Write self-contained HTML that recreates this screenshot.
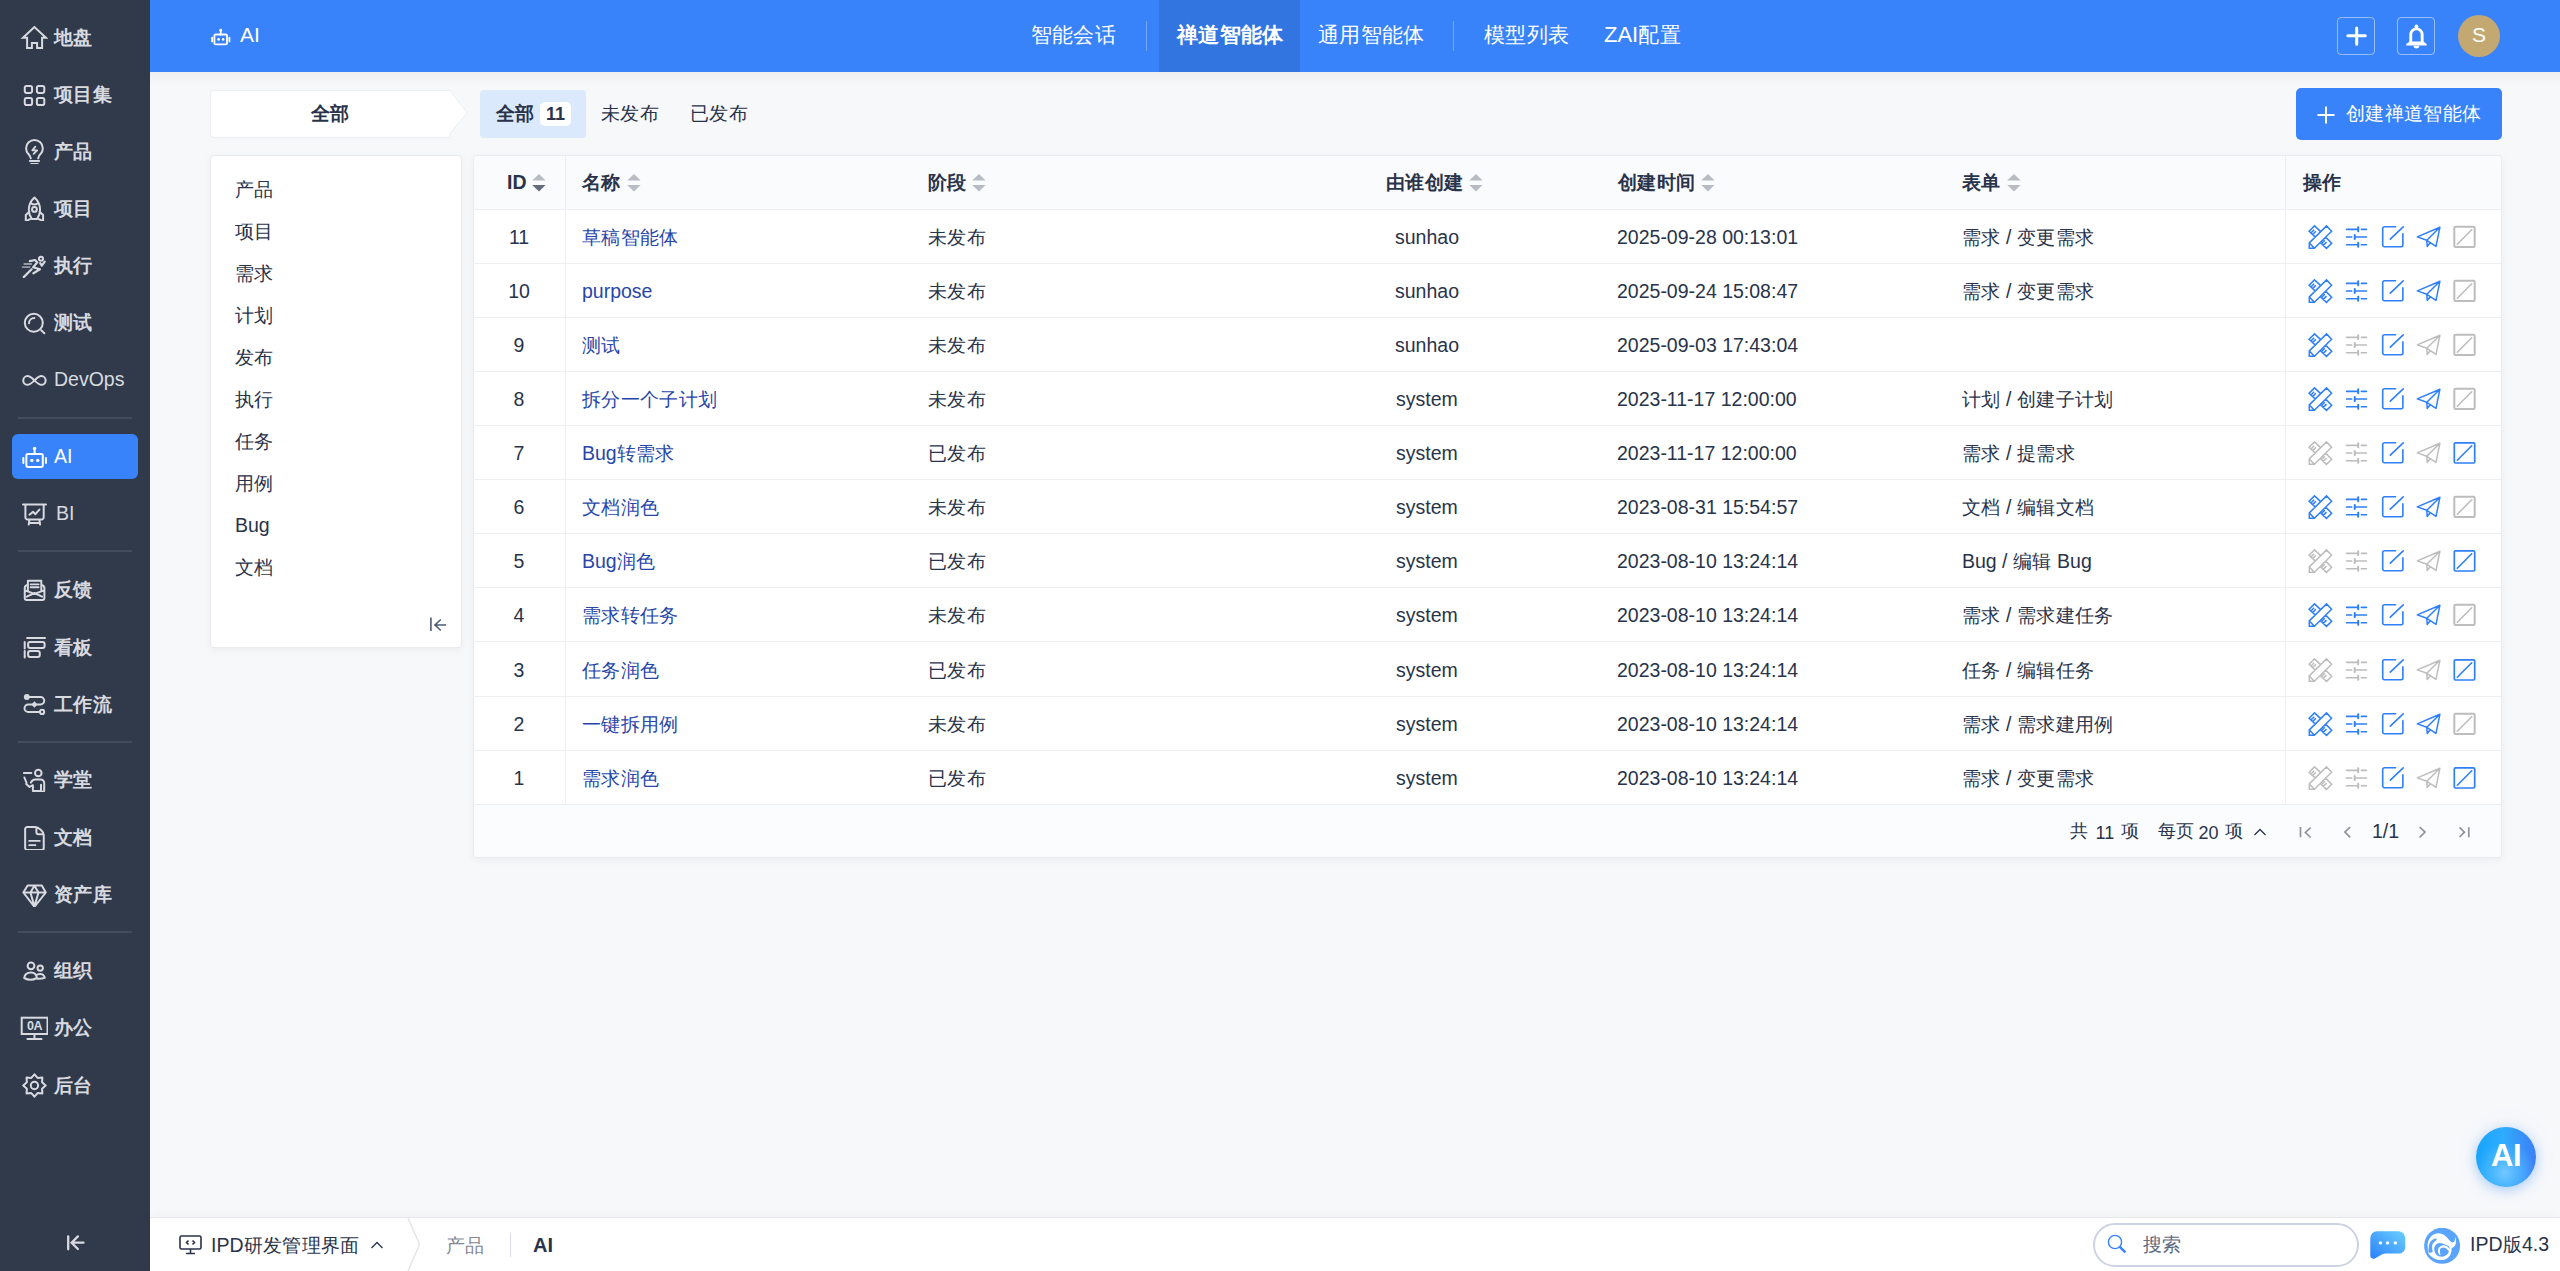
<!DOCTYPE html><html><head><meta charset="utf-8"><style>
*{box-sizing:border-box;margin:0;padding:0}
html,body{width:2560px;height:1271px;overflow:hidden}
body{background:#f7f8fa;font-family:"Liberation Sans", sans-serif;color:#29334a;font-size:19.5px;position:relative}
.a{position:absolute;white-space:nowrap}
.t{position:absolute;white-space:nowrap;line-height:30px;height:30px}
#side{position:absolute;left:0;top:0;width:150px;height:1271px;background:#303a4b}
.si{position:absolute;left:0;width:150px;height:40px}
.si svg{position:absolute;left:18px;top:3px}
.si>span{position:absolute;left:54px;top:5px;line-height:30px;font-size:19.5px;color:#d8dae0;font-weight:bold}
.sdiv{position:absolute;left:18px;width:114px;height:2px;background:#444d5e}
#hdr{position:absolute;left:150px;top:0;width:2410px;height:72px;background:#3883fa}
.nav{position:absolute;top:20px;line-height:30px;font-size:22px;color:#fff}
.vdiv{position:absolute;width:1px;background:rgba(255,255,255,.3)}
.card{position:absolute;background:#fff;border:1px solid #e9ebf0;border-radius:4px}
.th{position:absolute;top:167px;line-height:30px;font-weight:bold;font-size:19.5px}
.td{position:absolute;line-height:30px}
.lnk{color:#2846a8}
.c{font-size:97.5%;letter-spacing:.35px}
.nav .c{font-size:97.5%;letter-spacing:.35px}
.hl{position:absolute;left:474px;width:2027px;height:1px;background:#eceef2}
</style></head><body><div id="side">
<div class="sdiv" style="top:417px"></div>
<div class="sdiv" style="top:550px"></div>
<div class="sdiv" style="top:741px"></div>
<div class="sdiv" style="top:931px"></div>
<div class="a" style="left:12px;top:434px;width:126px;height:45px;background:#3883fa;border-radius:6px"></div>
<div class="si" style="top:17px"><svg width="30" height="30" viewBox="0 0 30 30" fill="none" stroke="#d8dae0" color="#d8dae0" stroke-width="2" stroke-linecap="round" stroke-linejoin="round"><path d="M16.45 7 L5 17.7 H9.1 V28 H13.9 V23 H19.1 V28 H24.1 V17.7 H28 Z" stroke-linejoin="miter"/></svg><span style="color:#d8dae0;font-weight:bold"><span class="c">地盘</span></span></div>
<div class="si" style="top:74px"><svg width="30" height="30" viewBox="0 0 30 30" fill="none" stroke="#d8dae0" color="#d8dae0" stroke-width="2" stroke-linecap="round" stroke-linejoin="round"><rect x="6.75" y="9" width="7.3" height="6.9" rx="1.8"/><rect x="18.9" y="9" width="7.4" height="6.9" rx="1.8"/><rect x="6.75" y="21.05" width="7.3" height="6.9" rx="1.8"/><rect x="18.9" y="21.05" width="7.4" height="6.9" rx="1.8"/></svg><span style="color:#d8dae0;font-weight:bold"><span class="c">项目集</span></span></div>
<div class="si" style="top:131px"><svg width="30" height="30" viewBox="0 0 30 30" fill="none" stroke="#d8dae0" color="#d8dae0" stroke-width="2" stroke-linecap="round" stroke-linejoin="round"><path d="M12.8 24.3 C12.5 22.5 11.5 21 10.2 19.8 A8.35 8.35 0 1 1 22.7 19.8 C21.4 21 20.4 22.5 20.2 24.3 M11.9 26.9 H21.1 M13.2 30 H19.8"/><path d="M17.4 12.6 L14.3 16.4 H19.2 L15.6 19.8" stroke-width="1.8"/></svg><span style="color:#d8dae0;font-weight:bold"><span class="c">产品</span></span></div>
<div class="si" style="top:188px"><svg width="30" height="30" viewBox="0 0 30 30" fill="none" stroke="#d8dae0" color="#d8dae0" stroke-width="2" stroke-linecap="round" stroke-linejoin="round"><path d="M16.45 6.6 C12.7 10 10.8 14.8 10.8 19 C10.8 22.5 12.2 25.5 13.8 28.1 H19.1 C20.7 25.5 22.1 22.5 22.1 19 C22.1 14.8 20.2 10 16.45 6.6 Z M13.4 12.6 Q16.45 14.2 19.5 12.6 M11.3 20.7 L7.8 24 V30.1 L13.2 27.6 M21.6 20.7 L25.1 24 V30.1 L19.7 27.6"/><circle cx="16.45" cy="18.45" r="2.4"/></svg><span style="color:#d8dae0;font-weight:bold"><span class="c">项目</span></span></div>
<div class="si" style="top:245px"><svg width="30" height="30" viewBox="0 0 30 30" fill="none" stroke="#d8dae0" color="#d8dae0" stroke-width="2" stroke-linecap="round" stroke-linejoin="round"><circle cx="23" cy="10.7" r="2.05"/><path d="M11.8 13.1 L17.1 12 L19.3 14.4 L15.2 19.3 L21.9 21.4 L15.4 25.3 M22.2 15.2 L23.8 17.7 L26.7 13.6 M13.6 21.3 L5.7 29.1" stroke-width="2.2"/><path d="M6.3 16 H13.3 M4.6 19.1 H11.7" stroke-width="1.8" opacity=".6"/></svg><span style="color:#d8dae0;font-weight:bold"><span class="c">执行</span></span></div>
<div class="si" style="top:302px"><svg width="30" height="30" viewBox="0 0 30 30" fill="none" stroke="#d8dae0" color="#d8dae0" stroke-width="2" stroke-linecap="round" stroke-linejoin="round"><circle cx="15.8" cy="17.8" r="9"/><path d="M23.2 25.2 L26.4 28.3 M11 18.2 A5.3 5.3 0 0 1 16.4 13.1"/></svg><span style="color:#d8dae0;font-weight:bold"><span class="c">测试</span></span></div>
<div class="si" style="top:359px"><svg width="30" height="30" viewBox="0 0 30 30" fill="none" stroke="#d8dae0" color="#d8dae0" stroke-width="2" stroke-linecap="round" stroke-linejoin="round"><path d="M16.45 18.45 C14 16.2 12.2 14.1 9.6 14.1 A4.3 4.3 0 0 0 9.6 22.8 C12.2 22.8 14 20.7 16.45 18.45 C18.9 16.2 20.7 14.1 23.3 14.1 A4.3 4.3 0 0 1 23.3 22.8 C20.7 22.8 18.9 20.7 16.45 18.45 Z"/></svg><span style="color:#d8dae0;font-weight:normal">DevOps</span></div>
<div class="si" style="top:436px"><svg width="30" height="30" viewBox="0 0 30 30" fill="none" stroke="#fff" color="#fff" stroke-width="2" stroke-linecap="round" stroke-linejoin="round"><rect x="8.35" y="15" width="16.45" height="12.9" rx="1.6"/><path d="M16.6 9.6 V15 M5.35 19 V24 M27.95 19 V24"/><circle cx="16.6" cy="9.4" r="1.7" fill="currentColor" stroke="none"/><circle cx="13.8" cy="21.4" r="1.65" fill="currentColor" stroke="none"/><circle cx="19.8" cy="21.4" r="1.65" fill="currentColor" stroke="none"/></svg><span style="color:#fff;font-weight:normal">AI</span></div>
<div class="si" style="top:493px"><svg width="30" height="30" viewBox="0 0 30 30" fill="none" stroke="#d8dae0" color="#d8dae0" stroke-width="2" stroke-linecap="round" stroke-linejoin="round"><path d="M5 8.6 H28 M7.4 8.6 V21.3 A2.2 2.2 0 0 0 9.6 23.5 H23.5 A2.2 2.2 0 0 0 25.7 21.3 V8.6 M11.4 24 L10.7 28.6 M21.4 24 L22.1 28.6 M11 27 H22 M11.5 18.7 L15 15.8 L17.4 18.2 L21.4 13.6" stroke-linejoin="round"/></svg><span style="left:56px;color:#d8dae0;font-weight:normal">BI</span></div>
<div class="si" style="top:569px"><svg width="30" height="30" viewBox="0 0 30 30" fill="none" stroke="#d8dae0" color="#d8dae0" stroke-width="2" stroke-linecap="round" stroke-linejoin="round"><path d="M9.9 12.6 C8 13.1 6.75 14.2 6.75 16 V26 A2 2 0 0 0 8.75 28 H24.4 A2 2 0 0 0 26.4 26 V16 C26.4 14.2 25.1 13.1 23.3 12.6 M9.9 18.6 V8.75 H23.3 V18.6 M7.2 18.4 L16.45 22 L25.9 18.4 M8.8 24.6 L16.45 21 L24.1 24.6"/><path d="M12.6 12.3 H20.6 M12.6 15.25 H20.6" stroke-width="1.8"/></svg><span style="color:#d8dae0;font-weight:bold"><span class="c">反馈</span></span></div>
<div class="si" style="top:627px"><svg width="30" height="30" viewBox="0 0 30 30" fill="none" stroke="#d8dae0" color="#d8dae0" stroke-width="2" stroke-linecap="round" stroke-linejoin="round"><path d="M9.1 7.9 H27 M6.7 11.9 V18.4 M6.7 21 V27.5"/><rect x="10.1" y="12" width="16.5" height="6" rx="2"/><rect x="10.1" y="21.05" width="11.65" height="5.95" rx="2"/></svg><span style="color:#d8dae0;font-weight:bold"><span class="c">看板</span></span></div>
<div class="si" style="top:684px"><svg width="30" height="30" viewBox="0 0 30 30" fill="none" stroke="#d8dae0" color="#d8dae0" stroke-width="2" stroke-linecap="round" stroke-linejoin="round"><circle cx="8.8" cy="10" r="2.9" fill="currentColor" stroke="none"/><path d="M11 10 H22.5 A3.75 3.75 0 0 1 22.5 17.5 H10.2 A3.7 3.7 0 0 0 10.2 24.9 H21.9"/><circle cx="24.1" cy="24.9" r="2.1"/><path d="M16.45 14.2 L19.5 17.5 L16.45 20.8 L13.4 17.5 Z" fill="currentColor" stroke="none"/></svg><span style="color:#d8dae0;font-weight:bold"><span class="c">工作流</span></span></div>
<div class="si" style="top:759px"><svg width="30" height="30" viewBox="0 0 30 30" fill="none" stroke="#d8dae0" color="#d8dae0" stroke-width="2" stroke-linecap="round" stroke-linejoin="round"><circle cx="20.3" cy="11" r="3.3"/><path d="M5.9 11.1 H13.3 M6.4 15.5 L8.6 21 M8.2 22 L11.5 24.9 L14.9 23.2 V28.9 H23 M12.9 20.6 C13.9 18.5 15 17.5 17 17.5 H22.7 A3.5 3.5 0 0 1 26.2 21 V28.3 A1.5 1.5 0 0 1 23.5 29.2 M23 22.7 V28.5"/></svg><span style="color:#d8dae0;font-weight:bold"><span class="c">学堂</span></span></div>
<div class="si" style="top:817px"><svg width="30" height="30" viewBox="0 0 30 30" fill="none" stroke="#d8dae0" color="#d8dae0" stroke-width="2" stroke-linecap="round" stroke-linejoin="round"><path d="M25.75 15 V28 A2 2 0 0 1 23.75 30 H9.15 A2 2 0 0 1 7.15 28 V9 A2 2 0 0 1 9.15 7 H17 C20.5 7 25.75 11.5 25.75 15 M18.4 7.6 V12.2 A2 2 0 0 0 20.4 14.2 H25.4"/><path d="M11.2 20.9 H21.7 M11.2 25.15 H17.4" stroke-width="1.9"/></svg><span style="color:#d8dae0;font-weight:bold"><span class="c">文档</span></span></div>
<div class="si" style="top:874px"><svg width="30" height="30" viewBox="0 0 30 30" fill="none" stroke="#d8dae0" color="#d8dae0" stroke-width="2" stroke-linecap="round" stroke-linejoin="round"><path d="M9.6 8.6 H23.8 L27.8 15.5 L16.45 29.8 L5.35 15.5 Z M5.35 15.5 H27.8 M12.4 15.5 L16.45 8.8 L20.5 15.5 M12.4 15.5 L16.45 29.3 L20.5 15.5" stroke-linejoin="round"/></svg><span style="color:#d8dae0;font-weight:bold"><span class="c">资产库</span></span></div>
<div class="si" style="top:950px"><svg width="30" height="30" viewBox="0 0 30 30" fill="none" stroke="#d8dae0" color="#d8dae0" stroke-width="2" stroke-linecap="round" stroke-linejoin="round"><circle cx="13" cy="12.85" r="3.4"/><circle cx="22.2" cy="15.1" r="2.7"/><path d="M6.2 25 C6.5 21.5 9 19.4 13 19.4 C16.5 19.4 18.6 21.5 18.9 25 C15 27.1 10 27.1 6.2 25 Z M19.7 21.4 C20.4 21.1 21.2 20.9 22.2 20.9 C24.5 20.9 26.3 22.6 26.8 24.8 C24.5 25.6 22 25.9 19.4 25.7"/></svg><span style="color:#d8dae0;font-weight:bold"><span class="c">组织</span></span></div>
<div class="si" style="top:1007px"><svg width="30" height="30" viewBox="0 0 30 30" fill="none" stroke="#d8dae0" color="#d8dae0" stroke-width="2" stroke-linecap="round" stroke-linejoin="round"><rect x="3.7" y="7.7" width="25.8" height="16.3" stroke-linejoin="miter"/><path d="M16.45 24 V28.9 M9.4 29 H23.5"/><text x="9" y="20.3" font-size="12.5" font-weight="bold" fill="currentColor" stroke="none" font-family="Liberation Sans" letter-spacing="-.5">0A</text></svg><span style="color:#d8dae0;font-weight:bold"><span class="c">办公</span></span></div>
<div class="si" style="top:1065px"><svg width="30" height="30" viewBox="0 0 30 30" fill="none" stroke="#d8dae0" color="#d8dae0" stroke-width="2" stroke-linecap="round" stroke-linejoin="round"><path d="M16.45 6.30 L19.59 9.92 L24.37 9.58 L24.03 14.36 L27.65 17.50 L24.03 20.64 L24.37 25.42 L19.59 25.08 L16.45 28.70 L13.31 25.08 L8.53 25.42 L8.87 20.64 L5.25 17.50 L8.87 14.36 L8.53 9.58 L13.31 9.92 Z"/><circle cx="16.45" cy="17.5" r="3.7"/></svg><span style="color:#d8dae0;font-weight:bold"><span class="c">后台</span></span></div>
<svg class="a" style="left:57px;top:1225px" width="34" height="34" viewBox="0 0 34 34" fill="none" stroke="#d8dae0" stroke-width="2.3" stroke-linecap="round"><path d="M11.2 11.3 V24.3 M14.6 17.7 H26.5 M20.9 11.4 L14.6 17.7 L20.9 24"/></svg>
</div>
<div id="hdr">
<svg class="a" style="left:58px;top:22.5px" width="23" height="23" viewBox="0 0 30 30" fill="none" stroke="#fff" stroke-width="2.4" stroke-linecap="round"><rect x="8.35" y="15" width="16.45" height="12.9" rx="1.6"/><path d="M16.6 9.6 V15 M5.35 19 V24 M27.95 19 V24"/><circle cx="16.6" cy="9.4" r="1.8" fill="#fff" stroke="none"/><circle cx="13.8" cy="21.4" r="1.7" fill="#fff" stroke="none"/><circle cx="19.8" cy="21.4" r="1.7" fill="#fff" stroke="none"/></svg>
<div class="nav" style="left:90px;font-size:21px;top:19.5px">AI</div>
<div class="a" style="left:1009px;top:0;width:141px;height:72px;background:rgba(0,0,0,.1)"></div>
<div class="nav" style="left:880.5px;font-weight:normal"><span class="c">智能会话</span></div>
<div class="nav" style="left:1027px;font-weight:bold"><span class="c">禅道智能体</span></div>
<div class="nav" style="left:1168px;font-weight:normal"><span class="c">通用智能体</span></div>
<div class="nav" style="left:1334px;font-weight:normal"><span class="c">模型列表</span></div>
<div class="nav" style="left:1454px;font-weight:normal">ZAI<span class="c">配置</span></div>
<div class="vdiv" style="left:996px;top:21px;height:30px"></div>
<div class="vdiv" style="left:1303px;top:21px;height:30px"></div>
<div class="a" style="left:2186.5px;top:16.5px;width:38.5px;height:38.5px;border:1.5px solid rgba(255,255,255,.48);border-radius:4px"></div>
<svg class="a" style="left:2186.5px;top:16.5px" width="39" height="39" viewBox="0 0 39 39" stroke="#fff" stroke-width="3" stroke-linecap="round"><path d="M19.7 10.9 V27.2 M10.9 18.85 H28.3"/></svg>
<div class="a" style="left:2246.8px;top:16.5px;width:38.5px;height:38.5px;border:1.5px solid rgba(255,255,255,.48);border-radius:4px"></div>
<svg class="a" style="left:2246.8px;top:16.5px" width="39" height="39" viewBox="0 0 39 39"><path d="M13.75 25.5 V17.6 A5.7 5.7 0 0 1 25.15 17.6 V25.5" fill="none" stroke="#fff" stroke-width="2.9"/><path d="M12.6 24.4 L9.2 26.9 V28.6 H29.7 V26.9 L26.3 24.4 Z" fill="#fff"/><path d="M16.6 28.8 A2.85 2.7 0 0 0 22.3 28.8 Z" fill="#fff"/><circle cx="19.45" cy="9.4" r="1.9" fill="#fff"/></svg>
<div class="a" style="left:2308px;top:15px;width:42px;height:42px;border-radius:50%;background:#c4a872;color:#fff;font-size:21px;line-height:39px;text-align:center">S</div>
</div>
<div class="a" style="left:150px;top:72px;width:2410px;height:14px;background:linear-gradient(rgba(0,0,0,.04),rgba(0,0,0,0))"></div>
<svg class="a" style="left:210px;top:90px" width="260" height="49" viewBox="0 0 260 49"><path d="M4 0.5 H240 L257 22.8 L240 43.5 V47.5 H4 A3.5 3.5 0 0 1 0.5 44 V4 A3.5 3.5 0 0 1 4 0.5 Z" fill="#fff" stroke="#eceef3"/></svg>
<div class="t" style="left:311px;top:98px;font-weight:bold"><span class="c">全部</span></div>
<div class="a" style="left:480px;top:90px;width:106px;height:48px;background:#dbe9fd;border-radius:4px"></div>
<div class="t" style="left:496px;top:98px;font-weight:bold"><span class="c">全部</span></div>
<div class="a" style="left:540px;top:102px;width:31px;height:24px;background:#fff;border-radius:5px;font-weight:bold;font-size:18px;line-height:24px;text-align:center">11</div>
<div class="t" style="left:601px;top:98px"><span class="c">未发布</span></div>
<div class="t" style="left:690px;top:98px"><span class="c">已发布</span></div>
<div class="a" style="left:2296px;top:88px;width:206px;height:52px;background:#3883fa;border-radius:5px"></div>
<svg class="a" style="left:2317px;top:106px" width="18" height="18" viewBox="0 0 18 18" stroke="#fff" stroke-width="2"><path d="M9 0.5 V17.5 M0.5 9 H17.5"/></svg>
<div class="t" style="left:2346px;top:98px;color:#fff"><span class="c">创建禅道智能体</span></div>
<div class="card" style="left:210px;top:155px;width:252px;height:493px;box-shadow:0 2px 8px rgba(0,0,0,.05)"></div>
<div class="t" style="left:235px;top:174px"><span class="c">产品</span></div>
<div class="t" style="left:235px;top:216px"><span class="c">项目</span></div>
<div class="t" style="left:235px;top:258px"><span class="c">需求</span></div>
<div class="t" style="left:235px;top:300px"><span class="c">计划</span></div>
<div class="t" style="left:235px;top:342px"><span class="c">发布</span></div>
<div class="t" style="left:235px;top:384px"><span class="c">执行</span></div>
<div class="t" style="left:235px;top:426px"><span class="c">任务</span></div>
<div class="t" style="left:235px;top:468px"><span class="c">用例</span></div>
<div class="t" style="left:235px;top:510px">Bug</div>
<div class="t" style="left:235px;top:552px"><span class="c">文档</span></div>
<svg class="a" style="left:426px;top:614px" width="24" height="20" viewBox="0 0 24 20" fill="none" stroke="#4b5b76" stroke-width="1.6"><path d="M4.9 3.5 V17 M8.3 11 H20 M14.8 5.5 L9 11 L14.8 16.5"/></svg>
<div class="card" style="left:473px;top:155px;width:2029px;height:703px;box-shadow:0 2px 8px rgba(0,0,0,.05)"></div>
<div class="a" style="left:474px;top:156px;width:2027px;height:53px;background:#fafbfd;border-radius:4px 4px 0 0"></div>
<div class="a" style="left:474px;top:804px;width:2027px;height:53px;background:#fbfcfd;border-radius:0 0 4px 4px"></div>
<div class="th" style="left:507px">ID</div>
<svg class="a" style="left:532px;top:174px" width="14" height="18" viewBox="0 0 14 18"><path d="M7 0.1 L13.6 6.6 H0.2 Z" fill="#b8bcc5"/><path d="M0.2 11 H13.6 L7 17.5 Z" fill="#646c7c"/></svg>
<div class="th" style="left:582px"><span class="c">名称</span></div>
<svg class="a" style="left:627px;top:174px" width="14" height="18" viewBox="0 0 14 18"><path d="M7 0.1 L13.6 6.6 H0.2 Z" fill="#b8bcc5"/><path d="M0.2 11 H13.6 L7 17.5 Z" fill="#b8bcc5"/></svg>
<div class="th" style="left:928px"><span class="c">阶段</span></div>
<svg class="a" style="left:972px;top:174px" width="14" height="18" viewBox="0 0 14 18"><path d="M7 0.1 L13.6 6.6 H0.2 Z" fill="#b8bcc5"/><path d="M0.2 11 H13.6 L7 17.5 Z" fill="#b8bcc5"/></svg>
<div class="th" style="left:1386px"><span class="c">由谁创建</span></div>
<svg class="a" style="left:1469px;top:174px" width="14" height="18" viewBox="0 0 14 18"><path d="M7 0.1 L13.6 6.6 H0.2 Z" fill="#b8bcc5"/><path d="M0.2 11 H13.6 L7 17.5 Z" fill="#b8bcc5"/></svg>
<div class="th" style="left:1618px"><span class="c">创建时间</span></div>
<svg class="a" style="left:1701px;top:174px" width="14" height="18" viewBox="0 0 14 18"><path d="M7 0.1 L13.6 6.6 H0.2 Z" fill="#b8bcc5"/><path d="M0.2 11 H13.6 L7 17.5 Z" fill="#b8bcc5"/></svg>
<div class="th" style="left:1962px"><span class="c">表单</span></div>
<svg class="a" style="left:2007px;top:174px" width="14" height="18" viewBox="0 0 14 18"><path d="M7 0.1 L13.6 6.6 H0.2 Z" fill="#b8bcc5"/><path d="M0.2 11 H13.6 L7 17.5 Z" fill="#b8bcc5"/></svg>
<div class="th" style="left:2303px"><span class="c">操作</span></div>
<div class="hl" style="top:209px"></div>
<div class="td" style="left:473px;width:92px;text-align:center;top:222px">11</div>
<div class="td lnk" style="left:582px;top:222px"><span class="c">草稿智能体</span></div>
<div class="td" style="left:928px;top:222px"><span class="c">未发布</span></div>
<div class="td" style="left:1371px;width:112px;text-align:center;top:222px">sunhao</div>
<div class="td" style="left:1617px;top:222px">2025-09-28 00:13:01</div>
<div class="td" style="left:1962px;top:222px"><span class="c">需求</span> / <span class="c">变更需求</span></div>
<svg class="a" style="left:2306px;top:222px" width="30" height="30" viewBox="0 0 30 30" fill="none" stroke="#2e7ff8" stroke-width="1.5" stroke-linejoin="miter"><path d="M3.3 20.9 L20.5 3.9 L25.6 9.3 L8.4 26.3 H3.3 Z M3.3 20.9 L8.4 26.3 M14.4 9.4 L8.5 3.9 L3.1 9.3 L9.1 14.9 M4.9 11.0 L8.2 7.7 M6.6 12.6 L9.9 9.3 M19.6 15.1 L25.7 21.2 L20.5 26.4 L14.4 20.8 M15.4 21.7 L18.8 18.3 M17.2 23.4 L20.5 20.1"/></svg><svg class="a" style="left:2344px;top:222px" width="26" height="30" viewBox="0 0 26 30" fill="none" stroke="#2e7ff8" stroke-width="1.7" stroke-linecap="round"><path d="M2.6 7.3 H14.2 M17.4 7.3 H22.4 M2.6 15 H7.6 M11.4 15 H22.4 M2.6 22.75 H14.2 M17.4 22.75 H22.4"/><path d="M14.2 5.3 V9.3 M10.75 13 V17 M14.2 20.7 V24.7" stroke-width="2"/></svg><svg class="a" style="left:2380px;top:224px" width="26" height="26" viewBox="0 0 26 26" fill="none" stroke="#2e7ff8" stroke-width="1.6" stroke-linecap="round"><path d="M15.6 2.8 H4.4 A1.7 1.7 0 0 0 2.7 4.5 V21.1 A1.7 1.7 0 0 0 4.4 22.8 H21.2 A1.7 1.7 0 0 0 22.9 21.1 V9.7 M10.3 15.1 L23.2 2.8"/></svg><svg class="a" style="left:2414px;top:224px" width="30" height="26" viewBox="0 0 30 26" fill="none" stroke="#2e7ff8" stroke-width="1.5" stroke-linejoin="round" stroke-linecap="round"><path d="M25.9 3.2 L3.3 12.9 L12.8 16.3 L22 22.4 Z M25.9 3.2 L12.8 16.3 L13.2 22.4 L15.6 19.6"/></svg><svg class="a" style="left:2451px;top:224px" width="26" height="26" viewBox="0 0 26 26" fill="none" stroke="#bdbdbd" stroke-width="2" stroke-linecap="round"><rect x="3.3" y="2.8" width="20.4" height="20.2" rx="1.2"/><path d="M6.3 20.2 L20.7 5.8" stroke-width="1.6"/></svg>
<div class="hl" style="top:263px"></div>
<div class="td" style="left:473px;width:92px;text-align:center;top:276px">10</div>
<div class="td lnk" style="left:582px;top:276px">purpose</div>
<div class="td" style="left:928px;top:276px"><span class="c">未发布</span></div>
<div class="td" style="left:1371px;width:112px;text-align:center;top:276px">sunhao</div>
<div class="td" style="left:1617px;top:276px">2025-09-24 15:08:47</div>
<div class="td" style="left:1962px;top:276px"><span class="c">需求</span> / <span class="c">变更需求</span></div>
<svg class="a" style="left:2306px;top:276px" width="30" height="30" viewBox="0 0 30 30" fill="none" stroke="#2e7ff8" stroke-width="1.5" stroke-linejoin="miter"><path d="M3.3 20.9 L20.5 3.9 L25.6 9.3 L8.4 26.3 H3.3 Z M3.3 20.9 L8.4 26.3 M14.4 9.4 L8.5 3.9 L3.1 9.3 L9.1 14.9 M4.9 11.0 L8.2 7.7 M6.6 12.6 L9.9 9.3 M19.6 15.1 L25.7 21.2 L20.5 26.4 L14.4 20.8 M15.4 21.7 L18.8 18.3 M17.2 23.4 L20.5 20.1"/></svg><svg class="a" style="left:2344px;top:276px" width="26" height="30" viewBox="0 0 26 30" fill="none" stroke="#2e7ff8" stroke-width="1.7" stroke-linecap="round"><path d="M2.6 7.3 H14.2 M17.4 7.3 H22.4 M2.6 15 H7.6 M11.4 15 H22.4 M2.6 22.75 H14.2 M17.4 22.75 H22.4"/><path d="M14.2 5.3 V9.3 M10.75 13 V17 M14.2 20.7 V24.7" stroke-width="2"/></svg><svg class="a" style="left:2380px;top:278px" width="26" height="26" viewBox="0 0 26 26" fill="none" stroke="#2e7ff8" stroke-width="1.6" stroke-linecap="round"><path d="M15.6 2.8 H4.4 A1.7 1.7 0 0 0 2.7 4.5 V21.1 A1.7 1.7 0 0 0 4.4 22.8 H21.2 A1.7 1.7 0 0 0 22.9 21.1 V9.7 M10.3 15.1 L23.2 2.8"/></svg><svg class="a" style="left:2414px;top:278px" width="30" height="26" viewBox="0 0 30 26" fill="none" stroke="#2e7ff8" stroke-width="1.5" stroke-linejoin="round" stroke-linecap="round"><path d="M25.9 3.2 L3.3 12.9 L12.8 16.3 L22 22.4 Z M25.9 3.2 L12.8 16.3 L13.2 22.4 L15.6 19.6"/></svg><svg class="a" style="left:2451px;top:278px" width="26" height="26" viewBox="0 0 26 26" fill="none" stroke="#bdbdbd" stroke-width="2" stroke-linecap="round"><rect x="3.3" y="2.8" width="20.4" height="20.2" rx="1.2"/><path d="M6.3 20.2 L20.7 5.8" stroke-width="1.6"/></svg>
<div class="hl" style="top:317px"></div>
<div class="td" style="left:473px;width:92px;text-align:center;top:330px">9</div>
<div class="td lnk" style="left:582px;top:330px"><span class="c">测试</span></div>
<div class="td" style="left:928px;top:330px"><span class="c">未发布</span></div>
<div class="td" style="left:1371px;width:112px;text-align:center;top:330px">sunhao</div>
<div class="td" style="left:1617px;top:330px">2025-09-03 17:43:04</div>
<div class="td" style="left:1962px;top:330px"></div>
<svg class="a" style="left:2306px;top:330px" width="30" height="30" viewBox="0 0 30 30" fill="none" stroke="#2e7ff8" stroke-width="1.5" stroke-linejoin="miter"><path d="M3.3 20.9 L20.5 3.9 L25.6 9.3 L8.4 26.3 H3.3 Z M3.3 20.9 L8.4 26.3 M14.4 9.4 L8.5 3.9 L3.1 9.3 L9.1 14.9 M4.9 11.0 L8.2 7.7 M6.6 12.6 L9.9 9.3 M19.6 15.1 L25.7 21.2 L20.5 26.4 L14.4 20.8 M15.4 21.7 L18.8 18.3 M17.2 23.4 L20.5 20.1"/></svg><svg class="a" style="left:2344px;top:330px" width="26" height="30" viewBox="0 0 26 30" fill="none" stroke="#bdbdbd" stroke-width="1.7" stroke-linecap="round"><path d="M2.6 7.3 H14.2 M17.4 7.3 H22.4 M2.6 15 H7.6 M11.4 15 H22.4 M2.6 22.75 H14.2 M17.4 22.75 H22.4"/><path d="M14.2 5.3 V9.3 M10.75 13 V17 M14.2 20.7 V24.7" stroke-width="2"/></svg><svg class="a" style="left:2380px;top:332px" width="26" height="26" viewBox="0 0 26 26" fill="none" stroke="#2e7ff8" stroke-width="1.6" stroke-linecap="round"><path d="M15.6 2.8 H4.4 A1.7 1.7 0 0 0 2.7 4.5 V21.1 A1.7 1.7 0 0 0 4.4 22.8 H21.2 A1.7 1.7 0 0 0 22.9 21.1 V9.7 M10.3 15.1 L23.2 2.8"/></svg><svg class="a" style="left:2414px;top:332px" width="30" height="26" viewBox="0 0 30 26" fill="none" stroke="#bdbdbd" stroke-width="1.5" stroke-linejoin="round" stroke-linecap="round"><path d="M25.9 3.2 L3.3 12.9 L12.8 16.3 L22 22.4 Z M25.9 3.2 L12.8 16.3 L13.2 22.4 L15.6 19.6"/></svg><svg class="a" style="left:2451px;top:332px" width="26" height="26" viewBox="0 0 26 26" fill="none" stroke="#bdbdbd" stroke-width="2" stroke-linecap="round"><rect x="3.3" y="2.8" width="20.4" height="20.2" rx="1.2"/><path d="M6.3 20.2 L20.7 5.8" stroke-width="1.6"/></svg>
<div class="hl" style="top:371px"></div>
<div class="td" style="left:473px;width:92px;text-align:center;top:384px">8</div>
<div class="td lnk" style="left:582px;top:384px"><span class="c">拆分一个子计划</span></div>
<div class="td" style="left:928px;top:384px"><span class="c">未发布</span></div>
<div class="td" style="left:1371px;width:112px;text-align:center;top:384px">system</div>
<div class="td" style="left:1617px;top:384px">2023-11-17 12:00:00</div>
<div class="td" style="left:1962px;top:384px"><span class="c">计划</span> / <span class="c">创建子计划</span></div>
<svg class="a" style="left:2306px;top:384px" width="30" height="30" viewBox="0 0 30 30" fill="none" stroke="#2e7ff8" stroke-width="1.5" stroke-linejoin="miter"><path d="M3.3 20.9 L20.5 3.9 L25.6 9.3 L8.4 26.3 H3.3 Z M3.3 20.9 L8.4 26.3 M14.4 9.4 L8.5 3.9 L3.1 9.3 L9.1 14.9 M4.9 11.0 L8.2 7.7 M6.6 12.6 L9.9 9.3 M19.6 15.1 L25.7 21.2 L20.5 26.4 L14.4 20.8 M15.4 21.7 L18.8 18.3 M17.2 23.4 L20.5 20.1"/></svg><svg class="a" style="left:2344px;top:384px" width="26" height="30" viewBox="0 0 26 30" fill="none" stroke="#2e7ff8" stroke-width="1.7" stroke-linecap="round"><path d="M2.6 7.3 H14.2 M17.4 7.3 H22.4 M2.6 15 H7.6 M11.4 15 H22.4 M2.6 22.75 H14.2 M17.4 22.75 H22.4"/><path d="M14.2 5.3 V9.3 M10.75 13 V17 M14.2 20.7 V24.7" stroke-width="2"/></svg><svg class="a" style="left:2380px;top:386px" width="26" height="26" viewBox="0 0 26 26" fill="none" stroke="#2e7ff8" stroke-width="1.6" stroke-linecap="round"><path d="M15.6 2.8 H4.4 A1.7 1.7 0 0 0 2.7 4.5 V21.1 A1.7 1.7 0 0 0 4.4 22.8 H21.2 A1.7 1.7 0 0 0 22.9 21.1 V9.7 M10.3 15.1 L23.2 2.8"/></svg><svg class="a" style="left:2414px;top:386px" width="30" height="26" viewBox="0 0 30 26" fill="none" stroke="#2e7ff8" stroke-width="1.5" stroke-linejoin="round" stroke-linecap="round"><path d="M25.9 3.2 L3.3 12.9 L12.8 16.3 L22 22.4 Z M25.9 3.2 L12.8 16.3 L13.2 22.4 L15.6 19.6"/></svg><svg class="a" style="left:2451px;top:386px" width="26" height="26" viewBox="0 0 26 26" fill="none" stroke="#bdbdbd" stroke-width="2" stroke-linecap="round"><rect x="3.3" y="2.8" width="20.4" height="20.2" rx="1.2"/><path d="M6.3 20.2 L20.7 5.8" stroke-width="1.6"/></svg>
<div class="hl" style="top:425px"></div>
<div class="td" style="left:473px;width:92px;text-align:center;top:438px">7</div>
<div class="td lnk" style="left:582px;top:438px">Bug<span class="c">转需求</span></div>
<div class="td" style="left:928px;top:438px"><span class="c">已发布</span></div>
<div class="td" style="left:1371px;width:112px;text-align:center;top:438px">system</div>
<div class="td" style="left:1617px;top:438px">2023-11-17 12:00:00</div>
<div class="td" style="left:1962px;top:438px"><span class="c">需求</span> / <span class="c">提需求</span></div>
<svg class="a" style="left:2306px;top:438px" width="30" height="30" viewBox="0 0 30 30" fill="none" stroke="#bdbdbd" stroke-width="1.5" stroke-linejoin="miter"><path d="M3.3 20.9 L20.5 3.9 L25.6 9.3 L8.4 26.3 H3.3 Z M3.3 20.9 L8.4 26.3 M14.4 9.4 L8.5 3.9 L3.1 9.3 L9.1 14.9 M4.9 11.0 L8.2 7.7 M6.6 12.6 L9.9 9.3 M19.6 15.1 L25.7 21.2 L20.5 26.4 L14.4 20.8 M15.4 21.7 L18.8 18.3 M17.2 23.4 L20.5 20.1"/></svg><svg class="a" style="left:2344px;top:438px" width="26" height="30" viewBox="0 0 26 30" fill="none" stroke="#bdbdbd" stroke-width="1.7" stroke-linecap="round"><path d="M2.6 7.3 H14.2 M17.4 7.3 H22.4 M2.6 15 H7.6 M11.4 15 H22.4 M2.6 22.75 H14.2 M17.4 22.75 H22.4"/><path d="M14.2 5.3 V9.3 M10.75 13 V17 M14.2 20.7 V24.7" stroke-width="2"/></svg><svg class="a" style="left:2380px;top:440px" width="26" height="26" viewBox="0 0 26 26" fill="none" stroke="#2e7ff8" stroke-width="1.6" stroke-linecap="round"><path d="M15.6 2.8 H4.4 A1.7 1.7 0 0 0 2.7 4.5 V21.1 A1.7 1.7 0 0 0 4.4 22.8 H21.2 A1.7 1.7 0 0 0 22.9 21.1 V9.7 M10.3 15.1 L23.2 2.8"/></svg><svg class="a" style="left:2414px;top:440px" width="30" height="26" viewBox="0 0 30 26" fill="none" stroke="#bdbdbd" stroke-width="1.5" stroke-linejoin="round" stroke-linecap="round"><path d="M25.9 3.2 L3.3 12.9 L12.8 16.3 L22 22.4 Z M25.9 3.2 L12.8 16.3 L13.2 22.4 L15.6 19.6"/></svg><svg class="a" style="left:2451px;top:440px" width="26" height="26" viewBox="0 0 26 26" fill="none" stroke="#2e7ff8" stroke-width="1.7" stroke-linecap="round"><rect x="3.3" y="2.8" width="20.4" height="20.2" rx="1.2"/><path d="M6.3 20.2 L20.7 5.8" stroke-width="1.6"/></svg>
<div class="hl" style="top:479px"></div>
<div class="td" style="left:473px;width:92px;text-align:center;top:492px">6</div>
<div class="td lnk" style="left:582px;top:492px"><span class="c">文档润色</span></div>
<div class="td" style="left:928px;top:492px"><span class="c">未发布</span></div>
<div class="td" style="left:1371px;width:112px;text-align:center;top:492px">system</div>
<div class="td" style="left:1617px;top:492px">2023-08-31 15:54:57</div>
<div class="td" style="left:1962px;top:492px"><span class="c">文档</span> / <span class="c">编辑文档</span></div>
<svg class="a" style="left:2306px;top:492px" width="30" height="30" viewBox="0 0 30 30" fill="none" stroke="#2e7ff8" stroke-width="1.5" stroke-linejoin="miter"><path d="M3.3 20.9 L20.5 3.9 L25.6 9.3 L8.4 26.3 H3.3 Z M3.3 20.9 L8.4 26.3 M14.4 9.4 L8.5 3.9 L3.1 9.3 L9.1 14.9 M4.9 11.0 L8.2 7.7 M6.6 12.6 L9.9 9.3 M19.6 15.1 L25.7 21.2 L20.5 26.4 L14.4 20.8 M15.4 21.7 L18.8 18.3 M17.2 23.4 L20.5 20.1"/></svg><svg class="a" style="left:2344px;top:492px" width="26" height="30" viewBox="0 0 26 30" fill="none" stroke="#2e7ff8" stroke-width="1.7" stroke-linecap="round"><path d="M2.6 7.3 H14.2 M17.4 7.3 H22.4 M2.6 15 H7.6 M11.4 15 H22.4 M2.6 22.75 H14.2 M17.4 22.75 H22.4"/><path d="M14.2 5.3 V9.3 M10.75 13 V17 M14.2 20.7 V24.7" stroke-width="2"/></svg><svg class="a" style="left:2380px;top:494px" width="26" height="26" viewBox="0 0 26 26" fill="none" stroke="#2e7ff8" stroke-width="1.6" stroke-linecap="round"><path d="M15.6 2.8 H4.4 A1.7 1.7 0 0 0 2.7 4.5 V21.1 A1.7 1.7 0 0 0 4.4 22.8 H21.2 A1.7 1.7 0 0 0 22.9 21.1 V9.7 M10.3 15.1 L23.2 2.8"/></svg><svg class="a" style="left:2414px;top:494px" width="30" height="26" viewBox="0 0 30 26" fill="none" stroke="#2e7ff8" stroke-width="1.5" stroke-linejoin="round" stroke-linecap="round"><path d="M25.9 3.2 L3.3 12.9 L12.8 16.3 L22 22.4 Z M25.9 3.2 L12.8 16.3 L13.2 22.4 L15.6 19.6"/></svg><svg class="a" style="left:2451px;top:494px" width="26" height="26" viewBox="0 0 26 26" fill="none" stroke="#bdbdbd" stroke-width="2" stroke-linecap="round"><rect x="3.3" y="2.8" width="20.4" height="20.2" rx="1.2"/><path d="M6.3 20.2 L20.7 5.8" stroke-width="1.6"/></svg>
<div class="hl" style="top:533px"></div>
<div class="td" style="left:473px;width:92px;text-align:center;top:546px">5</div>
<div class="td lnk" style="left:582px;top:546px">Bug<span class="c">润色</span></div>
<div class="td" style="left:928px;top:546px"><span class="c">已发布</span></div>
<div class="td" style="left:1371px;width:112px;text-align:center;top:546px">system</div>
<div class="td" style="left:1617px;top:546px">2023-08-10 13:24:14</div>
<div class="td" style="left:1962px;top:546px">Bug / <span class="c">编辑</span> Bug</div>
<svg class="a" style="left:2306px;top:546px" width="30" height="30" viewBox="0 0 30 30" fill="none" stroke="#bdbdbd" stroke-width="1.5" stroke-linejoin="miter"><path d="M3.3 20.9 L20.5 3.9 L25.6 9.3 L8.4 26.3 H3.3 Z M3.3 20.9 L8.4 26.3 M14.4 9.4 L8.5 3.9 L3.1 9.3 L9.1 14.9 M4.9 11.0 L8.2 7.7 M6.6 12.6 L9.9 9.3 M19.6 15.1 L25.7 21.2 L20.5 26.4 L14.4 20.8 M15.4 21.7 L18.8 18.3 M17.2 23.4 L20.5 20.1"/></svg><svg class="a" style="left:2344px;top:546px" width="26" height="30" viewBox="0 0 26 30" fill="none" stroke="#bdbdbd" stroke-width="1.7" stroke-linecap="round"><path d="M2.6 7.3 H14.2 M17.4 7.3 H22.4 M2.6 15 H7.6 M11.4 15 H22.4 M2.6 22.75 H14.2 M17.4 22.75 H22.4"/><path d="M14.2 5.3 V9.3 M10.75 13 V17 M14.2 20.7 V24.7" stroke-width="2"/></svg><svg class="a" style="left:2380px;top:548px" width="26" height="26" viewBox="0 0 26 26" fill="none" stroke="#2e7ff8" stroke-width="1.6" stroke-linecap="round"><path d="M15.6 2.8 H4.4 A1.7 1.7 0 0 0 2.7 4.5 V21.1 A1.7 1.7 0 0 0 4.4 22.8 H21.2 A1.7 1.7 0 0 0 22.9 21.1 V9.7 M10.3 15.1 L23.2 2.8"/></svg><svg class="a" style="left:2414px;top:548px" width="30" height="26" viewBox="0 0 30 26" fill="none" stroke="#bdbdbd" stroke-width="1.5" stroke-linejoin="round" stroke-linecap="round"><path d="M25.9 3.2 L3.3 12.9 L12.8 16.3 L22 22.4 Z M25.9 3.2 L12.8 16.3 L13.2 22.4 L15.6 19.6"/></svg><svg class="a" style="left:2451px;top:548px" width="26" height="26" viewBox="0 0 26 26" fill="none" stroke="#2e7ff8" stroke-width="1.7" stroke-linecap="round"><rect x="3.3" y="2.8" width="20.4" height="20.2" rx="1.2"/><path d="M6.3 20.2 L20.7 5.8" stroke-width="1.6"/></svg>
<div class="hl" style="top:587px"></div>
<div class="td" style="left:473px;width:92px;text-align:center;top:600px">4</div>
<div class="td lnk" style="left:582px;top:600px"><span class="c">需求转任务</span></div>
<div class="td" style="left:928px;top:600px"><span class="c">未发布</span></div>
<div class="td" style="left:1371px;width:112px;text-align:center;top:600px">system</div>
<div class="td" style="left:1617px;top:600px">2023-08-10 13:24:14</div>
<div class="td" style="left:1962px;top:600px"><span class="c">需求</span> / <span class="c">需求建任务</span></div>
<svg class="a" style="left:2306px;top:600px" width="30" height="30" viewBox="0 0 30 30" fill="none" stroke="#2e7ff8" stroke-width="1.5" stroke-linejoin="miter"><path d="M3.3 20.9 L20.5 3.9 L25.6 9.3 L8.4 26.3 H3.3 Z M3.3 20.9 L8.4 26.3 M14.4 9.4 L8.5 3.9 L3.1 9.3 L9.1 14.9 M4.9 11.0 L8.2 7.7 M6.6 12.6 L9.9 9.3 M19.6 15.1 L25.7 21.2 L20.5 26.4 L14.4 20.8 M15.4 21.7 L18.8 18.3 M17.2 23.4 L20.5 20.1"/></svg><svg class="a" style="left:2344px;top:600px" width="26" height="30" viewBox="0 0 26 30" fill="none" stroke="#2e7ff8" stroke-width="1.7" stroke-linecap="round"><path d="M2.6 7.3 H14.2 M17.4 7.3 H22.4 M2.6 15 H7.6 M11.4 15 H22.4 M2.6 22.75 H14.2 M17.4 22.75 H22.4"/><path d="M14.2 5.3 V9.3 M10.75 13 V17 M14.2 20.7 V24.7" stroke-width="2"/></svg><svg class="a" style="left:2380px;top:602px" width="26" height="26" viewBox="0 0 26 26" fill="none" stroke="#2e7ff8" stroke-width="1.6" stroke-linecap="round"><path d="M15.6 2.8 H4.4 A1.7 1.7 0 0 0 2.7 4.5 V21.1 A1.7 1.7 0 0 0 4.4 22.8 H21.2 A1.7 1.7 0 0 0 22.9 21.1 V9.7 M10.3 15.1 L23.2 2.8"/></svg><svg class="a" style="left:2414px;top:602px" width="30" height="26" viewBox="0 0 30 26" fill="none" stroke="#2e7ff8" stroke-width="1.5" stroke-linejoin="round" stroke-linecap="round"><path d="M25.9 3.2 L3.3 12.9 L12.8 16.3 L22 22.4 Z M25.9 3.2 L12.8 16.3 L13.2 22.4 L15.6 19.6"/></svg><svg class="a" style="left:2451px;top:602px" width="26" height="26" viewBox="0 0 26 26" fill="none" stroke="#bdbdbd" stroke-width="2" stroke-linecap="round"><rect x="3.3" y="2.8" width="20.4" height="20.2" rx="1.2"/><path d="M6.3 20.2 L20.7 5.8" stroke-width="1.6"/></svg>
<div class="hl" style="top:641px"></div>
<div class="td" style="left:473px;width:92px;text-align:center;top:655px">3</div>
<div class="td lnk" style="left:582px;top:655px"><span class="c">任务润色</span></div>
<div class="td" style="left:928px;top:655px"><span class="c">已发布</span></div>
<div class="td" style="left:1371px;width:112px;text-align:center;top:655px">system</div>
<div class="td" style="left:1617px;top:655px">2023-08-10 13:24:14</div>
<div class="td" style="left:1962px;top:655px"><span class="c">任务</span> / <span class="c">编辑任务</span></div>
<svg class="a" style="left:2306px;top:655px" width="30" height="30" viewBox="0 0 30 30" fill="none" stroke="#bdbdbd" stroke-width="1.5" stroke-linejoin="miter"><path d="M3.3 20.9 L20.5 3.9 L25.6 9.3 L8.4 26.3 H3.3 Z M3.3 20.9 L8.4 26.3 M14.4 9.4 L8.5 3.9 L3.1 9.3 L9.1 14.9 M4.9 11.0 L8.2 7.7 M6.6 12.6 L9.9 9.3 M19.6 15.1 L25.7 21.2 L20.5 26.4 L14.4 20.8 M15.4 21.7 L18.8 18.3 M17.2 23.4 L20.5 20.1"/></svg><svg class="a" style="left:2344px;top:655px" width="26" height="30" viewBox="0 0 26 30" fill="none" stroke="#bdbdbd" stroke-width="1.7" stroke-linecap="round"><path d="M2.6 7.3 H14.2 M17.4 7.3 H22.4 M2.6 15 H7.6 M11.4 15 H22.4 M2.6 22.75 H14.2 M17.4 22.75 H22.4"/><path d="M14.2 5.3 V9.3 M10.75 13 V17 M14.2 20.7 V24.7" stroke-width="2"/></svg><svg class="a" style="left:2380px;top:657px" width="26" height="26" viewBox="0 0 26 26" fill="none" stroke="#2e7ff8" stroke-width="1.6" stroke-linecap="round"><path d="M15.6 2.8 H4.4 A1.7 1.7 0 0 0 2.7 4.5 V21.1 A1.7 1.7 0 0 0 4.4 22.8 H21.2 A1.7 1.7 0 0 0 22.9 21.1 V9.7 M10.3 15.1 L23.2 2.8"/></svg><svg class="a" style="left:2414px;top:657px" width="30" height="26" viewBox="0 0 30 26" fill="none" stroke="#bdbdbd" stroke-width="1.5" stroke-linejoin="round" stroke-linecap="round"><path d="M25.9 3.2 L3.3 12.9 L12.8 16.3 L22 22.4 Z M25.9 3.2 L12.8 16.3 L13.2 22.4 L15.6 19.6"/></svg><svg class="a" style="left:2451px;top:657px" width="26" height="26" viewBox="0 0 26 26" fill="none" stroke="#2e7ff8" stroke-width="1.7" stroke-linecap="round"><rect x="3.3" y="2.8" width="20.4" height="20.2" rx="1.2"/><path d="M6.3 20.2 L20.7 5.8" stroke-width="1.6"/></svg>
<div class="hl" style="top:696px"></div>
<div class="td" style="left:473px;width:92px;text-align:center;top:709px">2</div>
<div class="td lnk" style="left:582px;top:709px"><span class="c">一键拆用例</span></div>
<div class="td" style="left:928px;top:709px"><span class="c">未发布</span></div>
<div class="td" style="left:1371px;width:112px;text-align:center;top:709px">system</div>
<div class="td" style="left:1617px;top:709px">2023-08-10 13:24:14</div>
<div class="td" style="left:1962px;top:709px"><span class="c">需求</span> / <span class="c">需求建用例</span></div>
<svg class="a" style="left:2306px;top:709px" width="30" height="30" viewBox="0 0 30 30" fill="none" stroke="#2e7ff8" stroke-width="1.5" stroke-linejoin="miter"><path d="M3.3 20.9 L20.5 3.9 L25.6 9.3 L8.4 26.3 H3.3 Z M3.3 20.9 L8.4 26.3 M14.4 9.4 L8.5 3.9 L3.1 9.3 L9.1 14.9 M4.9 11.0 L8.2 7.7 M6.6 12.6 L9.9 9.3 M19.6 15.1 L25.7 21.2 L20.5 26.4 L14.4 20.8 M15.4 21.7 L18.8 18.3 M17.2 23.4 L20.5 20.1"/></svg><svg class="a" style="left:2344px;top:709px" width="26" height="30" viewBox="0 0 26 30" fill="none" stroke="#2e7ff8" stroke-width="1.7" stroke-linecap="round"><path d="M2.6 7.3 H14.2 M17.4 7.3 H22.4 M2.6 15 H7.6 M11.4 15 H22.4 M2.6 22.75 H14.2 M17.4 22.75 H22.4"/><path d="M14.2 5.3 V9.3 M10.75 13 V17 M14.2 20.7 V24.7" stroke-width="2"/></svg><svg class="a" style="left:2380px;top:711px" width="26" height="26" viewBox="0 0 26 26" fill="none" stroke="#2e7ff8" stroke-width="1.6" stroke-linecap="round"><path d="M15.6 2.8 H4.4 A1.7 1.7 0 0 0 2.7 4.5 V21.1 A1.7 1.7 0 0 0 4.4 22.8 H21.2 A1.7 1.7 0 0 0 22.9 21.1 V9.7 M10.3 15.1 L23.2 2.8"/></svg><svg class="a" style="left:2414px;top:711px" width="30" height="26" viewBox="0 0 30 26" fill="none" stroke="#2e7ff8" stroke-width="1.5" stroke-linejoin="round" stroke-linecap="round"><path d="M25.9 3.2 L3.3 12.9 L12.8 16.3 L22 22.4 Z M25.9 3.2 L12.8 16.3 L13.2 22.4 L15.6 19.6"/></svg><svg class="a" style="left:2451px;top:711px" width="26" height="26" viewBox="0 0 26 26" fill="none" stroke="#bdbdbd" stroke-width="2" stroke-linecap="round"><rect x="3.3" y="2.8" width="20.4" height="20.2" rx="1.2"/><path d="M6.3 20.2 L20.7 5.8" stroke-width="1.6"/></svg>
<div class="hl" style="top:750px"></div>
<div class="td" style="left:473px;width:92px;text-align:center;top:763px">1</div>
<div class="td lnk" style="left:582px;top:763px"><span class="c">需求润色</span></div>
<div class="td" style="left:928px;top:763px"><span class="c">已发布</span></div>
<div class="td" style="left:1371px;width:112px;text-align:center;top:763px">system</div>
<div class="td" style="left:1617px;top:763px">2023-08-10 13:24:14</div>
<div class="td" style="left:1962px;top:763px"><span class="c">需求</span> / <span class="c">变更需求</span></div>
<svg class="a" style="left:2306px;top:763px" width="30" height="30" viewBox="0 0 30 30" fill="none" stroke="#bdbdbd" stroke-width="1.5" stroke-linejoin="miter"><path d="M3.3 20.9 L20.5 3.9 L25.6 9.3 L8.4 26.3 H3.3 Z M3.3 20.9 L8.4 26.3 M14.4 9.4 L8.5 3.9 L3.1 9.3 L9.1 14.9 M4.9 11.0 L8.2 7.7 M6.6 12.6 L9.9 9.3 M19.6 15.1 L25.7 21.2 L20.5 26.4 L14.4 20.8 M15.4 21.7 L18.8 18.3 M17.2 23.4 L20.5 20.1"/></svg><svg class="a" style="left:2344px;top:763px" width="26" height="30" viewBox="0 0 26 30" fill="none" stroke="#bdbdbd" stroke-width="1.7" stroke-linecap="round"><path d="M2.6 7.3 H14.2 M17.4 7.3 H22.4 M2.6 15 H7.6 M11.4 15 H22.4 M2.6 22.75 H14.2 M17.4 22.75 H22.4"/><path d="M14.2 5.3 V9.3 M10.75 13 V17 M14.2 20.7 V24.7" stroke-width="2"/></svg><svg class="a" style="left:2380px;top:765px" width="26" height="26" viewBox="0 0 26 26" fill="none" stroke="#2e7ff8" stroke-width="1.6" stroke-linecap="round"><path d="M15.6 2.8 H4.4 A1.7 1.7 0 0 0 2.7 4.5 V21.1 A1.7 1.7 0 0 0 4.4 22.8 H21.2 A1.7 1.7 0 0 0 22.9 21.1 V9.7 M10.3 15.1 L23.2 2.8"/></svg><svg class="a" style="left:2414px;top:765px" width="30" height="26" viewBox="0 0 30 26" fill="none" stroke="#bdbdbd" stroke-width="1.5" stroke-linejoin="round" stroke-linecap="round"><path d="M25.9 3.2 L3.3 12.9 L12.8 16.3 L22 22.4 Z M25.9 3.2 L12.8 16.3 L13.2 22.4 L15.6 19.6"/></svg><svg class="a" style="left:2451px;top:765px" width="26" height="26" viewBox="0 0 26 26" fill="none" stroke="#2e7ff8" stroke-width="1.7" stroke-linecap="round"><rect x="3.3" y="2.8" width="20.4" height="20.2" rx="1.2"/><path d="M6.3 20.2 L20.7 5.8" stroke-width="1.6"/></svg>
<div class="hl" style="top:804px"></div>
<div class="a" style="left:565px;top:156px;width:1px;height:648px;background:#eceef2"></div>
<div class="a" style="left:2285px;top:156px;width:1px;height:648px;background:#eceef2"></div>
<div class="td" style="left:2070px;top:816px;font-size:18px"><span class="c">共</span></div>
<div class="td" style="left:2095.5px;top:818px;font-size:18px">11</div>
<div class="td" style="left:2120.5px;top:816px;font-size:18px"><span class="c">项</span></div>
<div class="td" style="left:2158px;top:816px;font-size:18px"><span class="c">每页</span></div>
<div class="td" style="left:2198.5px;top:818px;font-size:18px">20</div>
<div class="td" style="left:2224.5px;top:816px;font-size:18px"><span class="c">项</span></div>
<svg class="a" style="left:2253px;top:827px" width="14" height="10" viewBox="0 0 14 10" fill="none" stroke="#29334a" stroke-width="1.3"><path d="M1.5 8 L7 2.5 L12.5 8"/></svg>
<svg class="a" style="left:2290px;top:820px" width="190" height="24" viewBox="0 0 190 24" fill="none" stroke="#8f9298" stroke-width="1.7"><path d="M10.5 7 V17.2 M20.7 7.5 L15.4 12.5 L20.7 17.5 M60.2 7 L54.9 12.1 L60.2 17.3 M129.6 7 L135 12.1 L129.6 17.3 M169.5 7.3 L174.4 12.2 L169.5 17 M178.8 7.3 V17.3"/></svg>
<div class="td" style="left:2372px;top:816px">1/1</div>
<div class="a" style="left:2476px;top:1127px;width:60px;height:60px;border-radius:50%;background:radial-gradient(circle at 48% 76%,#74c7ff 0%,rgba(90,190,255,.7) 22%,rgba(60,170,255,0) 55%),linear-gradient(90deg,#18a4fd 0%,#2eacfd 45%,#3e7ff6 100%);box-shadow:0 3px 12px rgba(40,130,250,.33),0 0 24px rgba(40,130,250,.08);color:#fff;font-weight:bold;font-size:31px;line-height:58px;text-align:center;letter-spacing:-.5px">AI</div>
<div class="a" style="left:150px;top:1217px;width:2410px;height:54px;background:#fff;border-top:1px solid #e6e8ee;box-shadow:0 -4px 10px rgba(0,0,0,.025)"></div>
<svg class="a" style="left:179px;top:1235px" width="23" height="20" viewBox="0 0 23 20" fill="none" stroke="#29334a" stroke-width="1.6"><rect x="1" y="1" width="21" height="13" rx="1.5"/><path d="M11.5 14 V18.5 M7 18.5 H16 M9.5 5.5 L7.5 7.5 L9.5 9.5 M13.5 5.5 L15.5 7.5 L13.5 9.5"/></svg>
<div class="td" style="left:211px;top:1230px">IPD<span class="c">研发管理界面</span></div>
<svg class="a" style="left:370px;top:1240px" width="14" height="10" viewBox="0 0 14 10" fill="none" stroke="#29334a" stroke-width="1.3"><path d="M1.5 8 L7 2.5 L12.5 8"/></svg>
<svg class="a" style="left:406px;top:1218px" width="16" height="53" viewBox="0 0 16 53" fill="none" stroke="#e3e5ea" stroke-width="1.5"><path d="M2 0 L13.5 26.5 L2 53"/></svg>
<div class="td" style="left:446px;top:1230px;color:#838996"><span class="c">产品</span></div>
<div class="a" style="left:510px;top:1233px;width:1px;height:24px;background:#d9dce2"></div>
<div class="td" style="left:533px;top:1230px;font-weight:bold;font-size:20px">AI</div>
<div class="a" style="left:2093px;top:1223px;width:266px;height:44px;border:2px solid #cdd2e4;border-radius:22px;background:#fff"></div>
<svg class="a" style="left:2107px;top:1234px" width="21" height="20" viewBox="0 0 21 20" fill="none" stroke="#3883fa"><circle cx="8" cy="8" r="6.6" stroke-width="1.4"/><path d="M12.6 12.6 L18.4 18.4" stroke-width="2.4"/></svg>
<div class="td" style="left:2143px;top:1228.5px;color:#5b6780"><span class="c">搜索</span></div>
<svg class="a" style="left:2369.5px;top:1231px" width="36" height="28" viewBox="0 0 36 28"><defs><linearGradient id="cg" x1="0" y1="1" x2="1" y2="0"><stop offset="0" stop-color="#2a7ffd"/><stop offset="1" stop-color="#6ad0fc"/></linearGradient></defs><path d="M7 0.2 H28.5 A6.8 6.8 0 0 1 35.3 7 V16 A6.6 6.6 0 0 1 28.7 22.6 H15.5 C12 22.6 8.5 26 4.8 27.4 C2.5 28.2 0.3 27 0.3 24.8 V7 A6.8 6.8 0 0 1 7 0.2 Z" fill="url(#cg)"/><circle cx="10.4" cy="11.9" r="1.7" fill="#fff"/><circle cx="17.6" cy="11.9" r="1.7" fill="#fff"/><circle cx="25.3" cy="11.9" r="1.7" fill="#fff"/></svg>
<svg class="a" style="left:2424px;top:1228px" width="36" height="36" viewBox="0 0 36 36"><circle cx="18.1" cy="17.8" r="18" fill="#5aa4fd"/><path d="M31.1 9 C31.2 12 30.8 13.9 28.8 14.4 C27 14.6 25.5 12.6 24 10.6 C21.5 7.5 18.5 5.4 14.5 5.2 C9.5 5.1 5.2 9 3.9 14.5 C3.4 17.5 3.6 21.5 4.2 24.7 C6 28.5 11 32 17.1 32.1 C22.5 32.2 26.5 28.5 27.4 23.5 C27.6 21.8 27.6 20.8 27.7 20 C29.5 19.4 31.2 18 31.8 15.5 C32.2 13.3 31.9 10.8 31.1 9 Z" fill="#fff"/><path d="M12.2 12.3 C13.2 11.3 12.8 10.2 11.3 10.5 C8.5 11 6.3 13.3 5.3 16 C4.6 18.5 4.5 21.5 4.4 24.2 C5.5 24.8 6.8 24.8 7.6 24.6 C8.6 24.2 8.9 23.6 8.6 23 C8 20.5 7.8 18 8.6 16 C9.3 14.5 10.8 13.5 12.2 12.3 Z" fill="#5aa4fd"/><path d="M25.3 18.4 C22.2 16.9 19 15.3 15.9 15.1 C13.5 15.1 11.5 16.5 10.5 18.8 C9.8 21.5 10.5 24.5 12.2 26.5 C13.8 28.2 16 28.9 18 28.7 C21 28.4 23.5 26.8 24.6 24.2 C25.3 22.5 25.6 20.2 25.3 18.4 Z" fill="#5aa4fd"/><path d="M15.8 25.8 C14.2 23 14.7 20 17.2 18.9 C19.8 17.9 23 18.9 24.8 21.8" fill="none" stroke="#fff" stroke-width="2.1" stroke-linecap="round"/><circle cx="19" cy="24.1" r="3.1" fill="#5aa4fd"/></svg>
<div class="td" style="left:2470px;top:1229px">IPD<span class="c">版</span>4.3</div></body></html>
